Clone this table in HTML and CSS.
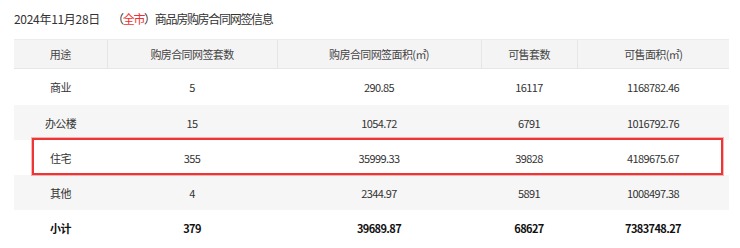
FILE: index.html
```html
<!DOCTYPE html>
<html lang="zh-CN">
<head>
<meta charset="utf-8">
<link rel="stylesheet" href="styles.css">
</head>
<body>
<div class="page">
  <div class="title"><span class="date">2024年11月28日</span><span class="rest"><span class="area">（<span class="red">全市</span>）</span>商品房购房合同网签信息</span></div>
  <div class="table-wrap">
    <table class="data">
      <colgroup>
        <col style="width:93px"><col style="width:170px"><col style="width:204px"><col style="width:96px"><col style="width:152px">
      </colgroup>
      <thead>
        <tr><th>用途</th><th>购房合同网签套数</th><th>购房合同网签面积(㎡)</th><th>可售套数</th><th>可售面积(㎡)</th></tr>
      </thead>
      <tbody>
        <tr class="first"><td>商业</td><td>5</td><td>290.85</td><td>16117</td><td>1168782.46</td></tr>
        <tr class="alt"><td>办公楼</td><td>15</td><td>1054.72</td><td>6791</td><td>1016792.76</td></tr>
        <tr><td>住宅</td><td>355</td><td>35999.33</td><td>39828</td><td>4189675.67</td></tr>
        <tr class="alt"><td>其他</td><td>4</td><td>2344.97</td><td>5891</td><td>1008497.38</td></tr>
        <tr class="total"><td>小计</td><td>379</td><td>39689.87</td><td>68627</td><td>7383748.27</td></tr>
      </tbody>
    </table>
    <div class="highlight"></div>
  </div>
</div>
</body>
</html>
```
FILE: styles.css
```css
html, body {
  margin: 0;
  padding: 0;
  background: #ffffff;
}
.page {
  padding: 9px 11px 0 14px;
  font-family: "Noto Sans CJK SC", "Noto Sans", sans-serif;
  color: #333333;
}
.title {
  font-size: 12px;
  line-height: 20px;
  height: 20px;
  margin-bottom: 10px;
  color: #333;
  white-space: nowrap;
}
.date {
  letter-spacing: -0.3px;
}
.rest {
  letter-spacing: -1.3px;
}
.area {
  margin-left: 12px;
}
.red {
  color: #f03030;
}
.table-wrap {
  position: relative;
  width: 715px;
}
.data {
  width: 715px;
  table-layout: fixed;
  border-collapse: collapse;
  font-size: 11px;
  letter-spacing: -0.6px;
}
.data th {
  height: 28px;
  padding: 0;
  background: #f4f4f4;
  font-weight: normal;
  color: #444;
  border-left: 1px solid #e6e6e6;
  border-top: 1px solid #ececec;
  border-bottom: 1px solid #e6e6e6;
  text-align: center;
}
.data th:first-child {
  border-left: none;
}
.data td {
  height: 35px;
  padding: 0;
  text-align: center;
  color: #333;
}
.data tr.first td {
  height: 36px;
}
.data tr.alt td {
  background: #f6f6f6;
}
.data tr.total td {
  font-weight: bold;
  color: #111;
}
.highlight {
  position: absolute;
  left: 18px;
  top: 99px;
  width: 687px;
  height: 33px;
  border: 2px solid #ee3535;
  box-shadow: 0 0 0 1px rgba(238, 53, 53, 0.35);
}
```
